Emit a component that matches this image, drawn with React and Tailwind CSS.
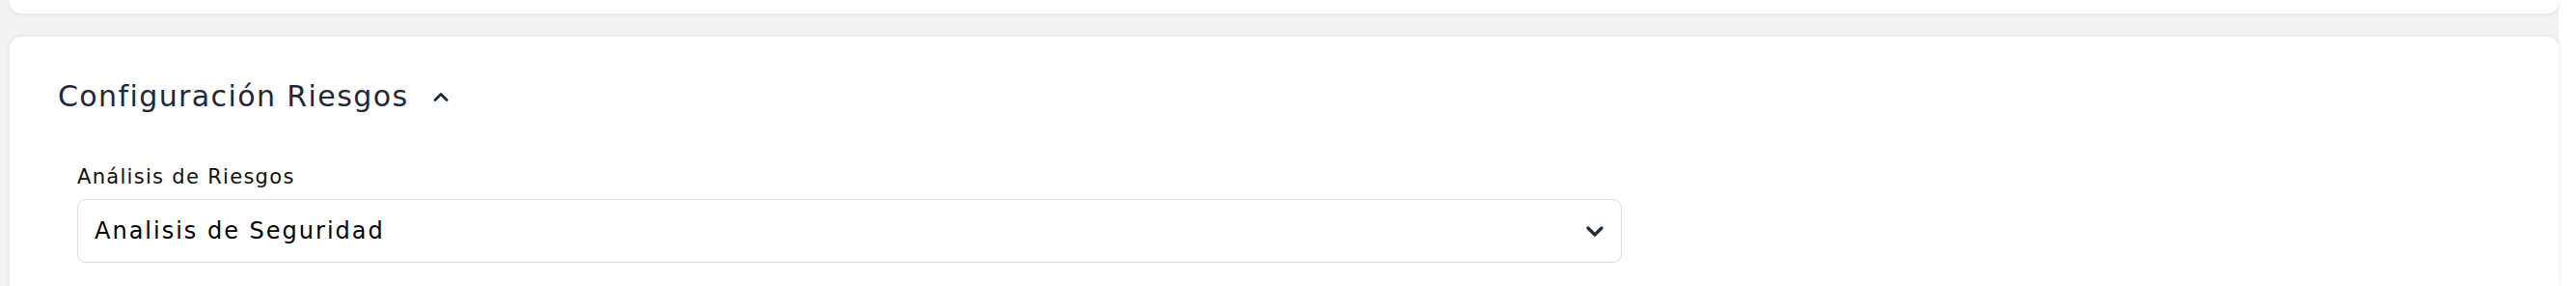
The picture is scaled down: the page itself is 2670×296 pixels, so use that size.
import React from "react";

function ChevronUp({ className }) {
  return (
    <svg className={className} viewBox="0 0 16 10" fill="none" stroke="currentColor" strokeWidth="2.8" strokeLinecap="round" strokeLinejoin="round">
      <path d="M2 8.5 8 2.5l6 6" />
    </svg>
  );
}

function ChevronDown({ className }) {
  return (
    <svg className={className} viewBox="0 0 18 11" fill="none" stroke="currentColor" strokeWidth="3.2" strokeLinecap="round" strokeLinejoin="round">
      <path d="M2 2l7 7 7-7" />
    </svg>
  );
}

export default function App() {
  return (
    <div className="flex h-[296px] w-full overflow-hidden bg-white font-['DejaVu_Sans',sans-serif]">
      <div className="flex w-[2652px] flex-col gap-[24px] bg-[#f3f3f3] pl-[10px]">
        <div className="h-[14px] rounded-b-[12px] bg-white shadow-[0_1px_5px_rgba(0,0,0,0.08)]" />

        <div className="flex-1 rounded-t-[12px] bg-white pl-[50px] pt-[44px] shadow-[0_0_6px_rgba(0,0,0,0.08)]">
          <div className="flex items-center gap-[26px]">
            <h2 className="text-[30px] leading-[36px] font-normal tracking-[1.4px] text-[#1e293b]">
              Configuración Riesgos
            </h2>
            <ChevronUp className="h-[10px] w-[16px] text-[#1f2937]" />
          </div>

          <div className="mt-[50px] w-[1601px] pl-[20px]">
            <label className="block text-[21px] leading-[30px] tracking-[1.3px] text-[#111111]">
              Análisis de Riesgos
            </label>
            <div className="mt-[8px] flex h-[66px] w-[1601px] items-center justify-between rounded-[9px] border-[1.5px] border-[#d9dde1] bg-white pl-[17px] pr-[18px]">
              <span className="text-[24px] leading-[32px] tracking-[2px] text-black">
                Analisis de Seguridad
              </span>
              <ChevronDown className="h-[11px] w-[18px] text-[#1f2937]" />
            </div>
          </div>
        </div>
      </div>
    </div>
  );
}
